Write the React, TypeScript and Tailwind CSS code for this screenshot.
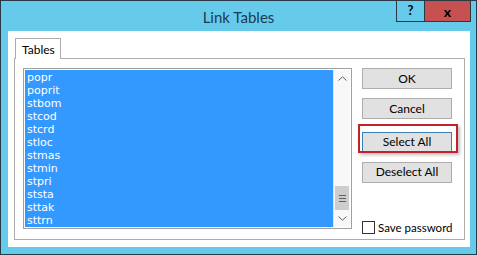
import { useState } from "react";

const tables = [
  "popr",
  "poprit",
  "stbom",
  "stcod",
  "stcrd",
  "stloc",
  "stmas",
  "stmin",
  "stpri",
  "ststa",
  "sttak",
  "sttrn",
];

function DialogButton({ label, focused }: { label: string; focused?: boolean }) {
  return (
    <button
      className={`w-[90px] h-[21px] text-[12px] text-black bg-[#e1e1e1] border ${
        focused ? "border-[#3c7fb1]" : "border-[#adadad]"
      }`}
    >
      {label}
    </button>
  );
}

export default function App() {
  const [savePassword, setSavePassword] = useState(false);

  return (
    <div
      className="w-[477px] h-[255px] border border-[#2a3a44] bg-[#66cbea] flex flex-col"
      style={{ fontFamily: 'Lato, "Noto Sans", sans-serif' }}
    >
      {/* Title bar */}
      <div className="relative h-[30px] flex items-center justify-center">
        <span className="text-[15px] text-[#1d3a52] mt-[2px]">Link Tables</span>
        <div className="absolute top-[-1px] right-[5px] flex">
          <div className="w-[29px] h-[22px] border border-[#2a3a44] flex items-center justify-center text-[13px] font-bold text-black">
            ?
          </div>
          <div className="w-[46px] h-[22px] border border-l-0 border-[#2a3a44] bg-[#c75050] flex items-center justify-center text-[14px] font-bold text-black">
            x
          </div>
        </div>
      </div>

      {/* Client area */}
      <div className="flex-1 ml-[7px] mr-[6px] mb-[7px] bg-white pt-[7px] pl-[6px] pr-[5px] flex flex-col">
        {/* Tab */}
        <div className="ml-[1px] w-[46px] h-[21px] border border-b-0 border-[#acacac] bg-white text-[12px] text-black pl-[6px] pt-[2px] relative z-10 -mb-[1px]">
          Tables
        </div>

        {/* Tab panel */}
        <div className="h-[182px] border border-[#acacac] flex pl-[8px] pt-[9px]">
          {/* List box */}
          <div className="w-[329px] h-[161px] border border-[#a0a0a0] p-[1px] flex bg-white">
            <div
              className="flex-1 bg-[#3399ff] pl-[2px] pt-[1px] text-white text-[11px] leading-[13px]"
              style={{ fontFamily: '"DejaVu Sans", Verdana, sans-serif' }}
            >
              {tables.map((t) => (
                <div key={t} className="h-[13px]">
                  {t}
                </div>
              ))}
            </div>
            {/* Scrollbar */}
            <div className="w-[17px] border-l border-[#e2e2e2] bg-[#f8f8f8] flex flex-col">
              <div className="h-[17px] flex items-center justify-center">
                <svg width="9" height="5" viewBox="0 0 9 5">
                  <path d="M0.5 4.5 L4.5 0.8 L8.5 4.5" stroke="#606060" fill="none" strokeWidth="1" />
                </svg>
              </div>
              <div className="flex-1" />
              <div className="mx-[1px] h-[24px] bg-[#cdcdcd] flex flex-col items-center justify-center gap-[2px]">
                <div className="w-[7px] h-[1px] bg-[#606060]" />
                <div className="w-[7px] h-[1px] bg-[#606060]" />
                <div className="w-[7px] h-[1px] bg-[#606060]" />
              </div>
              <div className="h-[17px] flex items-center justify-center">
                <svg width="9" height="5" viewBox="0 0 9 5">
                  <path d="M0.5 0.5 L4.5 4.2 L8.5 0.5" stroke="#606060" fill="none" strokeWidth="1" />
                </svg>
              </div>
            </div>
          </div>

          {/* Buttons */}
          <div className="ml-[10px] flex flex-col">
            <div className="flex flex-col gap-[9px]">
              <DialogButton label="OK" />
              <DialogButton label="Cancel" />
              <div className="relative">
                <DialogButton label="Select All" focused />
                <div className="absolute -left-[4px] -top-[4px] w-[100px] h-[29px] border-2 border-[#c0232b] shadow-[2px_2px_3px_rgba(0,0,0,0.25)]" />
              </div>
              <DialogButton label="Deselect All" />
            </div>
            <label className="mt-[36px] flex items-center gap-[3px] text-[11.5px] text-black">
              <span
                onClick={() => setSavePassword(!savePassword)}
                className="w-[13px] h-[13px] border border-[#333333] bg-white flex items-center justify-center text-[10px] leading-none"
              >
                {savePassword ? "✓" : ""}
              </span>
              Save password
            </label>
          </div>
        </div>
      </div>
    </div>
  );
}
